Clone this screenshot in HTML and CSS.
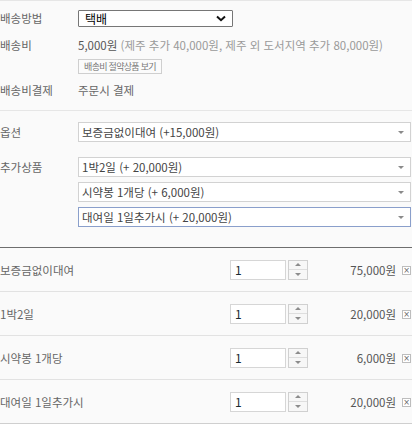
FILE: index.html
```html
<!DOCTYPE html>
<html lang="ko">
<head>
<meta charset="utf-8">
<link rel="stylesheet" href="styles.css">
</head>
<body>
<div class="sec sec-ship">
  <div class="row r-method">
    <div class="lbl">배송방법</div>
    <div class="val">
      <div class="native-select">
        <span>택배</span>
        <svg class="chev" width="10" height="7" viewBox="0 0 10 7"><polyline points="1,1.5 5,5.2 9,1.5" fill="none" stroke="#111" stroke-width="2"/></svg>
      </div>
    </div>
  </div>
  <div class="row r-fee">
    <div class="lbl">배송비</div>
    <div class="val">
      <div class="fee"><b>5,000원</b> (제주 추가 40,000원, 제주 외 도서지역 추가 80,000원)</div>
      <div class="btn">배송비 절약상품 보기</div>
    </div>
  </div>
  <div class="row r-pay">
    <div class="lbl">배송비결제</div>
    <div class="val dark">주문시 결제</div>
  </div>
</div>

<div class="sec sec-opt">
  <div class="row r-opt">
    <div class="lbl">옵션</div>
    <div class="val">
      <div class="sel"><span>보증금없이대여 (+15,000원)</span><i class="tri"></i></div>
    </div>
  </div>
  <div class="row r-add">
    <div class="lbl">추가상품</div>
    <div class="val stack">
      <div class="sel"><span>1박2일 (+ 20,000원)</span><i class="tri"></i></div>
      <div class="sel"><span>시약봉 1개당 (+ 6,000원)</span><i class="tri"></i></div>
      <div class="sel focus"><span>대여일 1일추가시 (+ 20,000원)</span><i class="tri"></i></div>
    </div>
  </div>
</div>

<div class="items">
  <div class="item">
    <div class="name">보증금없이대여</div>
    <div class="qty">1</div>
    <div class="spin"><i class="up"></i><i class="dn"></i></div>
    <div class="price">75,000원</div>
    <div class="del">×</div>
  </div>
  <div class="item">
    <div class="name">1박2일</div>
    <div class="qty">1</div>
    <div class="spin"><i class="up"></i><i class="dn"></i></div>
    <div class="price">20,000원</div>
    <div class="del">×</div>
  </div>
  <div class="item">
    <div class="name">시약봉 1개당</div>
    <div class="qty">1</div>
    <div class="spin"><i class="up"></i><i class="dn"></i></div>
    <div class="price">6,000원</div>
    <div class="del">×</div>
  </div>
  <div class="item last">
    <div class="name">대여일 1일추가시</div>
    <div class="qty">1</div>
    <div class="spin"><i class="up"></i><i class="dn"></i></div>
    <div class="price">20,000원</div>
    <div class="del">×</div>
  </div>
</div>
</body>
</html>
```

FILE: styles.css
```css
html, body {
  margin: 0;
  padding: 0;
  background: #fafafa;
}
body {
  width: 412px;
  height: 424px;
  overflow: hidden;
  font-family: "Noto Sans CJK KR", "Noto Sans", sans-serif;
  font-size: 11.5px;
  color: #666;
}
.sec {
  border-top: 1px solid #e6e6e6;
}
.row {
  display: flex;
}
.lbl {
  width: 78px;
  flex: none;
  color: #666;
  line-height: 16px;
}
.val {
  flex: 1;
  min-width: 0;
}
.sec-ship {
  padding-top: 9px;
  padding-bottom: 12px;
  border-bottom: 1px solid #e6e6e6;
}
.r-method .lbl {
  line-height: 17px;
}
.native-select {
  width: 155px;
  height: 17px;
  box-sizing: border-box;
  border: 1px solid #767676;
  border-radius: 1px;
  background: #fff;
  display: flex;
  align-items: center;
  justify-content: space-between;
  padding: 0 6px 0 6px;
  color: #000;
  font-size: 12px;
  line-height: 15px;
}
.chev {
  display: block;
}
.r-fee {
  margin-top: 10px;
}
.fee {
  line-height: 16px;
  color: #999;
  white-space: nowrap;
}
.fee b {
  font-weight: normal;
  color: #555;
}
.btn {
  margin-top: 6px;
  width: 84px;
  height: 15px;
  box-sizing: border-box;
  border: 1px solid #cfcfcf;
  background: #fbfbfb;
  color: #777;
  font-size: 9px;
  letter-spacing: -0.7px;
  line-height: 13px;
  text-align: center;
  white-space: nowrap;
}
.r-pay {
  margin-top: 8px;
}
.dark {
  color: #666;
  line-height: 16px;
}
.sec-opt {
  border-top: none;
  padding-top: 11px;
  padding-bottom: 20px;
  border-bottom: 1px solid #6e6e6e;
}
.r-opt .lbl,
.r-add .lbl {
  line-height: 20px;
}
.r-add {
  margin-top: 15px;
}
.stack {
  display: flex;
  flex-direction: column;
  gap: 5px;
}
.sel {
  height: 20px;
  box-sizing: border-box;
  border: 1px solid #d2d2d2;
  background: #fff;
  margin-right: 1px;
  display: flex;
  align-items: center;
  justify-content: space-between;
  padding: 0 6px 0 3px;
  color: #444;
  line-height: 18px;
  white-space: nowrap;
}
.sel.focus {
  border-color: #8a9fcb;
}
.tri {
  width: 0;
  height: 0;
  border-left: 3px solid transparent;
  border-right: 3px solid transparent;
  border-top: 3px solid #8a8a8a;
}
.items {
  display: flex;
  flex-direction: column;
}
.item {
  height: 43px;
  border-bottom: 1px solid #e2e2e2;
  display: flex;
  align-items: center;
}
.item.last {
  border-bottom-color: #cfcfcf;
}
.name {
  width: 230px;
  flex: none;
  color: #666;
  line-height: 16px;
}
.qty {
  width: 56px;
  height: 20px;
  box-sizing: border-box;
  flex: none;
  border: 1px solid #d6d6d6;
  background: #fff;
  color: #1a2a33;
  font-size: 12px;
  line-height: 18px;
  padding-left: 4px;
}
.spin {
  width: 20px;
  height: 20px;
  box-sizing: border-box;
  flex: none;
  margin-left: 2px;
  border: 1px solid #d0d0d0;
  background: #f7f7f7;
  display: flex;
  flex-direction: column;
}
.spin i {
  flex: 1;
  display: flex;
  align-items: center;
  justify-content: center;
}
.spin .up {
  border-bottom: 1px solid #dedede;
}
.spin .up::before {
  content: "";
  border-left: 3px solid transparent;
  border-right: 3px solid transparent;
  border-bottom: 3px solid #8c8c8c;
}
.spin .dn::before {
  content: "";
  border-left: 3px solid transparent;
  border-right: 3px solid transparent;
  border-top: 3px solid #8c8c8c;
}
.price {
  flex: 1;
  text-align: right;
  padding-right: 6px;
  color: #555;
  line-height: 16px;
  white-space: nowrap;
}
.del {
  width: 9px;
  height: 9px;
  box-sizing: border-box;
  flex: none;
  margin-right: 1px;
  margin-top: 1px;
  border: 1px solid #bdbdbd;
  background: #fff;
  color: #666;
  font-size: 8px;
  line-height: 7px;
  text-align: center;
  font-family: "DejaVu Sans", sans-serif;
}
```
